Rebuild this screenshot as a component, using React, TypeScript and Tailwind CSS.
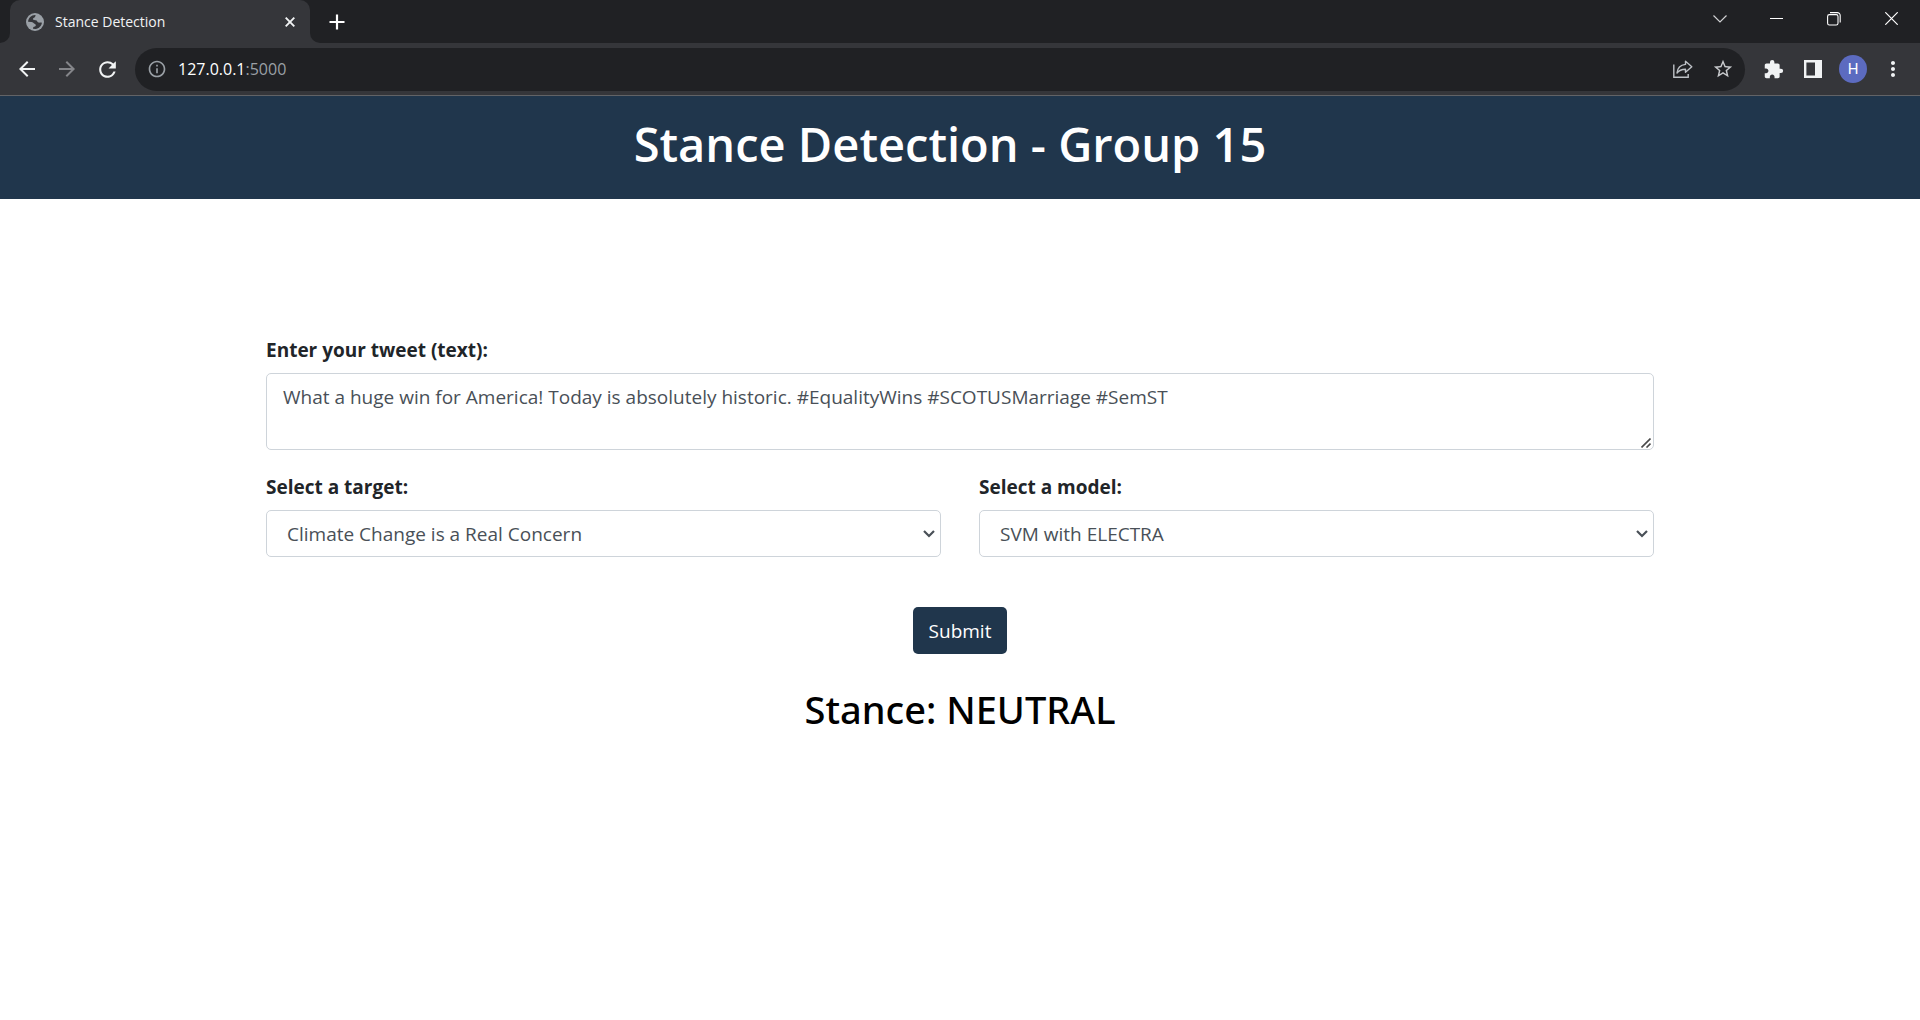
import type { ReactNode } from "react";
import {
  MdArrowBack,
  MdArrowForward,
  MdExtension,
  MdInfoOutline,
  MdMoreVert,
  MdRefresh,
  MdStarBorder,
} from "react-icons/md";

function IconButton({ label, className = "", children }: { label: string; className?: string; children: ReactNode }) {
  return (
    <button type="button" aria-label={label} className={`flex h-10 w-10 shrink-0 items-center justify-center ${className}`}>
      {children}
    </button>
  );
}

function Globe() {
  return (
    <svg width="18" height="18" viewBox="0 0 18 18" aria-hidden="true">
      <circle cx="9" cy="9" r="9" fill="#9aa0a6" />
      <path d="M9.6 2 C9.2 3 9.6 3.8 8.4 4.4 C7 5 6.4 6.2 7.4 6.8 C8.4 7.6 10.2 6.8 11 8 C11.6 9.2 12.6 9.8 13.8 9.6 C14.8 9.4 15.4 9.6 15.9 9.8 C15.5 12.9 13 15.6 9.6 16 L7 15.7 C7 14 7.6 13.6 9 13.4 C10.2 13 10 11.4 9 11 C7.6 10.4 7 9 5.4 9 L2.1 8.8 C2.2 5 5.4 2 9 2 Z" fill="#35363a" />
    </svg>
  );
}

function TabBar() {
  return (
    <div className="flex h-[43px] items-stretch bg-[#202124]">
      <div className="flex w-2.5 items-end bg-[#35363a]">
        <div className="h-full w-full rounded-br-[10px] bg-[#202124]" />
      </div>
      <div className="flex w-[300px] bg-[#202124]">
        <div className="flex w-full items-center rounded-t-[10px] bg-[#35363a] pl-4 pr-2.5">
          <Globe />
          <span className="ml-[11px] flex-1 text-[14px] leading-5 text-[#f1f3f4]">Stance Detection</span>
          <button type="button" aria-label="Close tab" className="flex h-5 w-5 items-center justify-center">
            <svg width="10" height="10" viewBox="0 0 10 10" stroke="#f1f3f4" strokeWidth="1.9" aria-hidden="true">
              <path d="M0.7 0.7 9.3 9.3M9.3 0.7 0.7 9.3" />
            </svg>
          </button>
        </div>
      </div>
      <div className="flex flex-1 bg-[#35363a]">
        <div className="flex flex-1 items-center justify-between rounded-bl-[10px] bg-[#202124] pl-[7px]">
          <IconButton label="New tab">
            <svg width="16" height="16" viewBox="0 0 16 16" stroke="#fff" strokeWidth="2.2" aria-hidden="true">
              <path d="M8 0.5V15.5M0.5 8H15.5" />
            </svg>
          </IconButton>
          <div className="flex h-[37px] self-start text-white">
            <button type="button" aria-label="Search tabs" className="flex w-[57px] items-center justify-center">
              <svg width="14" height="8" viewBox="0 0 14 8" fill="none" stroke="#d0d1d3" strokeWidth="1.2" aria-hidden="true">
                <path d="M0.5 0.5 7 7 13.5 0.5" />
              </svg>
            </button>
            <button type="button" aria-label="Minimize" className="flex w-[57px] items-center justify-center">
              <svg width="13" height="1" aria-hidden="true">
                <rect width="13" height="1" fill="#fff" />
              </svg>
            </button>
            <button type="button" aria-label="Restore" className="flex w-[57px] items-center justify-center">
              <svg width="14" height="14" viewBox="0 0 14 14" fill="none" stroke="#fff" strokeWidth="1.1" aria-hidden="true">
                <rect x="0.6" y="2.6" width="10.4" height="10.4" rx="1.8" />
                <path d="M3 0.6H10.2A3 3 0 0 1 13.2 3.6V10.6" />
              </svg>
            </button>
            <button type="button" aria-label="Close" className="flex w-[58px] items-center justify-center">
              <svg width="13" height="13" viewBox="0 0 13 13" stroke="#fff" strokeWidth="1.2" aria-hidden="true">
                <path d="M0.3 0.3 12.7 12.7M12.7 0.3 0.3 12.7" />
              </svg>
            </button>
          </div>
        </div>
      </div>
    </div>
  );
}

function Toolbar() {
  return (
    <div className="flex h-[53px] items-center border-b border-[#626366] bg-[#35363a] px-[7px]">
      <IconButton label="Back" className="text-[#f1f3f4]">
        <MdArrowBack size={24} />
      </IconButton>
      <IconButton label="Forward" className="text-[#85868a]">
        <MdArrowForward size={24} />
      </IconButton>
      <IconButton label="Reload" className="text-[#f1f3f4]">
        <MdRefresh size={25} />
      </IconButton>
      <div className="ml-2 flex h-[43px] flex-1 items-center rounded-full bg-[#202124] pl-3 pr-0.5">
        <MdInfoOutline size={20} className="text-[#9aa0a6]" />
        <span className="ml-[11px] flex-1 text-[16px] leading-6 text-[#9aa0a6]">
          <span className="text-white">127.0.0.1</span>:5000
        </span>
        <IconButton label="Share">
          <svg width="20" height="18" viewBox="0 0 20 18" fill="none" stroke="#bdc1c6" strokeWidth="1.4" aria-hidden="true">
            <path d="M0.8 4.5V17.2H15.2V14" />
            <path d="M12.5 1.2 18.8 6.8 12.5 12.2V9.2C8.5 9.2 6 10.2 4 13C4.4 8.4 7.4 5 12.5 4.4Z" strokeLinejoin="round" />
          </svg>
        </IconButton>
        <IconButton label="Bookmark" className="text-[#c8cacd]">
          <MdStarBorder size={22} />
        </IconButton>
      </div>
      <div className="ml-2 flex items-center text-[#f1f3f4]">
        <IconButton label="Extensions">
          <MdExtension size={21} />
        </IconButton>
        <IconButton label="Side panel">
          <svg width="18" height="18" viewBox="0 0 18 18" aria-hidden="true">
            <path fill="#f1f3f4" fillRule="evenodd" d="M0 0H18V18H0ZM2.4 2.4V15.6H11V2.4Z" />
          </svg>
        </IconButton>
        <IconButton label="Profile">
          <span className="flex h-7 w-7 items-center justify-center rounded-full bg-[#5c6bc0] font-[Roboto] text-[15px] leading-5 text-white">H</span>
        </IconButton>
        <IconButton label="Menu">
          <MdMoreVert size={24} />
        </IconButton>
      </div>
    </div>
  );
}

function SelectField({ id, label, options }: { id: string; label: string; options: string[] }) {
  return (
    <div className="flex-1">
      <label htmlFor={id} className="mb-[9px] block text-[19px] leading-[28px] font-bold">
        {label}
      </label>
      <div className="relative">
        <select
          id={id}
          className="block h-[47px] w-full appearance-none rounded-[5px] border border-[#ced4da] bg-white pl-5 pr-8 pt-px text-[19px] leading-[30px] text-[#495057]"
        >
          {options.map((option) => (
            <option key={option}>{option}</option>
          ))}
        </select>
        <svg
          className="pointer-events-none absolute top-5 right-1.5"
          width="12"
          height="8"
          viewBox="0 0 12 8"
          fill="none"
          stroke="#495057"
          strokeWidth="2.2"
          aria-hidden="true"
        >
          <path d="M1 1 6 6 11 1" />
        </svg>
      </div>
    </div>
  );
}

export default function App() {
  return (
    <div className="min-h-screen bg-white font-['Segoe_UI','Open_Sans',sans-serif] text-[#212529]">
      <TabBar />
      <Toolbar />
      <header className="bg-[#20364c] pt-[18px] pr-5 pb-[25px] text-center">
        <h1 className="text-[47px] leading-[60px] font-semibold text-white">Stance Detection - Group 15</h1>
      </header>
      <main className="px-5 pt-[137px]">
        <form className="mx-auto max-w-[1388px]" onSubmit={(event) => event.preventDefault()}>
          <label htmlFor="tweet" className="mb-[9px] block text-[19px] leading-[28px] font-bold">
            Enter your tweet (text):
          </label>
          <div className="relative">
            <textarea
              id="tweet"
              className="block h-[77px] w-full resize-none rounded-[5px] border border-[#ced4da] px-4 py-2 text-[19px] leading-[30px] text-[#495057]"
              defaultValue="What a huge win for America! Today is absolutely historic. #EqualityWins #SCOTUSMarriage #SemST"
            />
            <svg
              className="pointer-events-none absolute right-[3px] bottom-0.5"
              width="10"
              height="10"
              viewBox="0 0 10 10"
              stroke="#4a4a4a"
              strokeWidth="1.6"
              aria-hidden="true"
            >
              <path d="M0.5 9.5 9.5 0.5M5.5 9.5 9.5 5.5" />
            </svg>
          </div>
          <div className="mt-[23px] flex gap-[38px]">
            <SelectField id="target" label="Select a target:" options={["Climate Change is a Real Concern"]} />
            <SelectField id="model" label="Select a model:" options={["SVM with ELECTRA"]} />
          </div>
          <div className="mt-[50px] flex justify-center">
            <button type="submit" className="h-[47px] rounded-[5px] bg-[#20364c] px-4 pt-px text-[19px] leading-[30px] text-white">
              Submit
            </button>
          </div>
        </form>
        <h2 className="mt-[31px] text-center font-['Segoe_UI','Noto_Sans',sans-serif] text-[38px] leading-12 font-medium text-black">
          Stance: NEUTRAL
        </h2>
      </main>
    </div>
  );
}
